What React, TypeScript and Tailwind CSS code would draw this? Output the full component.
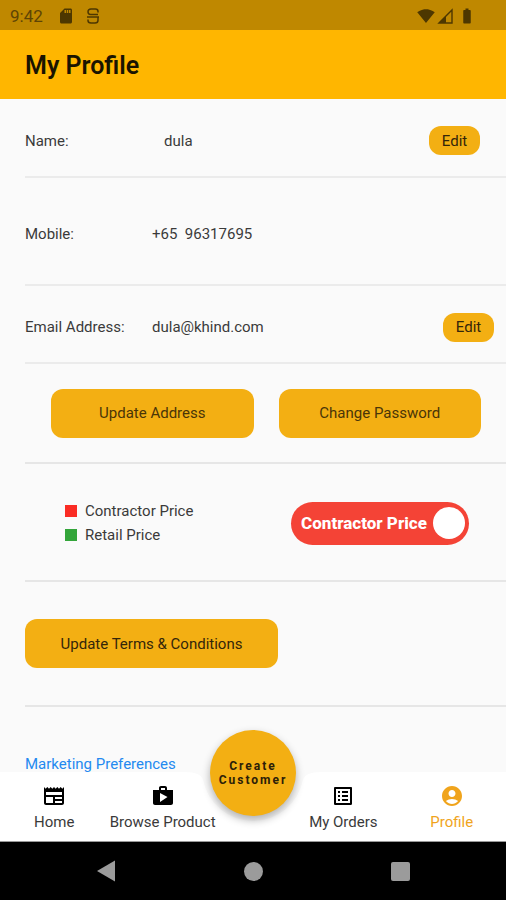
import { useState } from "react";
import type { ReactNode } from "react";
import {
  MdAccountCircle,
  MdBatteryFull,
  MdListAlt,
  MdOutlineNewspaper,
  MdSdCard,
  MdShop,
  MdSignalWifi4Bar,
} from "react-icons/md";

const TABS = [
  { id: "home", label: "Home", icon: MdOutlineNewspaper },
  { id: "browse", label: "Browse Product", icon: MdShop },
  { id: "orders", label: "My Orders", icon: MdListAlt },
  { id: "profile", label: "Profile", icon: MdAccountCircle },
];

/** Android status bar */
function StatusBar() {
  return (
    <div className="flex h-[30px] shrink-0 items-center justify-between bg-[#bf8800] pt-0.5 pr-[30px] pl-2.5 text-[#4d3700]">
      <div className="flex items-center">
        <span className="text-[17px] text-[#5e4405]">9:42</span>
        <MdSdCard size={18} className="ml-3.5" />
        <svg width="16" height="18" viewBox="0 0 16 18" fill="none" stroke="currentColor" strokeWidth="1.5" className="ml-2.5">
          <path d="M13 5.500V4.500Q13 2 10.500 2H6Q3 2 3 4.800Q3 7.500 5.500 7.500H13" />
          <path d="M2 10H14M13 10V13.200Q13 16 10 16H6Q3 16 3 13.500V12.500" />
        </svg>
      </div>
      <div className="flex items-center">
        <MdSignalWifi4Bar size={18} />
        <svg width="17" height="17" viewBox="0 0 17 17" className="ml-0.5">
          <path d="M2 15L15 2V15Z" fill="none" stroke="currentColor" strokeWidth="1.400" />
          <path d="M2 15L9 8V15Z" fill="currentColor" />
        </svg>
        <MdBatteryFull size={18} className="ml-1" />
      </div>
    </div>
  );
}

function InfoRow({
  label,
  className,
  action,
  children,
}: {
  label: string;
  className: string;
  action?: ReactNode;
  children: ReactNode;
}) {
  return (
    <div className={`ml-[25px] flex items-center border-b-2 border-[#ebebeb] ${className}`}>
      <span className="w-[127px] shrink-0">{label}</span>
      <span className="flex-1">{children}</span>
      {action}
    </div>
  );
}

function EditButton({ label }: { label: string }) {
  return (
    <button aria-label={label} className="h-[29px] w-[51px] rounded-xl bg-[#f3af13] text-[#33260a]">
      Edit
    </button>
  );
}

/** Switch between contractor and retail pricing */
function PriceToggle() {
  const [contractor, setContractor] = useState(true);

  return (
    <label
      className={`flex h-[43px] w-[178px] cursor-pointer items-center justify-between rounded-full px-1 ${
        contractor ? "bg-[#f44336]" : "flex-row-reverse bg-[#35a83a]"
      }`}
    >
      <input
        type="checkbox"
        role="switch"
        className="sr-only"
        checked={contractor}
        onChange={(e) => setContractor(e.target.checked)}
      />
      <span className="flex-1 text-center text-[17px] font-extrabold whitespace-nowrap text-white">
        {contractor ? "Contractor Price" : "Retail Price"}
      </span>
      <span className="size-8 shrink-0 rounded-full bg-white" />
    </label>
  );
}

function BottomBar() {
  const [active, setActive] = useState("profile");

  const renderTab = (tab: (typeof TABS)[number]) => {
    const Icon = tab.icon;
    const isActive = tab.id === active;
    return (
      <button
        key={tab.id}
        onClick={() => setActive(tab.id)}
        className={`flex flex-col items-center gap-1 whitespace-nowrap ${isActive ? "text-[#f0a41c]" : "text-[#3a3a3a]"}`}
      >
        <Icon size={24} className={isActive ? "" : "text-black"} />
        {tab.label}
      </button>
    );
  };

  return (
    <nav className="relative h-[70px] shrink-0 border-b border-[#999] bg-white">
      {/* Notch behind the floating button */}
      <svg width="136" height="56" viewBox="0 0 136 56" className="absolute top-0 left-1/2 -translate-x-1/2">
        <path d="M0 0H136Q120 0 118 8A51 51 0 0 1 18 8Q16 0 0 0Z" fill="#fafafa" />
      </svg>
      <div className="relative grid h-full grid-cols-[3fr_3fr_2fr_3fr_3fr] items-center pt-2.5 pb-2">
        {TABS.slice(0, 2).map(renderTab)}
        <span />
        {TABS.slice(2).map(renderTab)}
      </div>
      <button className="absolute -top-[42px] left-1/2 size-[86px] -translate-x-1/2 rounded-full bg-[#f3af13] text-xs leading-[14px] font-bold tracking-[2px] text-[#2b2008] shadow-[0_4px_8px_rgba(0,0,0,0.3)]">
        Create
        <br />
        Customer
      </button>
    </nav>
  );
}

/** Android navigation keys */
function SystemNav() {
  return (
    <div className="flex h-[58px] shrink-0 items-center justify-center gap-32 bg-black text-[#9b9b9b]">
      <button aria-label="Back">
        <svg width="20" height="22" viewBox="0 0 20 22" fill="currentColor">
          <path d="M19 .5V21.500L1 11Z" />
        </svg>
      </button>
      <button aria-label="Home" className="size-[19px] rounded-full bg-current" />
      <button aria-label="Recent apps" className="size-[19px] rounded-xs bg-current" />
    </div>
  );
}

export default function App() {
  return (
    <div className="flex h-screen flex-col overflow-hidden bg-[#fafafa] font-[Roboto,sans-serif] text-[15px] leading-5 text-[#3a3a3a]">
      <StatusBar />
      <header className="flex h-[69px] shrink-0 items-center bg-[#ffb600] px-[25px] pt-0.5">
        <h1 className="text-[25px] font-semibold text-[#1a1400]">My Profile</h1>
      </header>

      <main className="min-h-0 flex-1 overflow-y-auto [scrollbar-width:none]">
        <InfoRow label="Name:" className="h-[79px] pt-1.5 pr-[26px]" action={<EditButton label="Edit name" />}>
          <span className="pl-3">dula</span>
        </InfoRow>
        <InfoRow label="Mobile:" className="h-[108px] pt-1.5">
          +65&nbsp; 96317695
        </InfoRow>
        <InfoRow label="Email Address:" className="h-[78px] pt-1.5 pr-3" action={<EditButton label="Edit email address" />}>
          dula@khind.com
        </InfoRow>

        <div className="ml-[25px] flex h-[100px] items-center gap-[25px] border-b-2 border-[#e6e6e6] pr-[25px] pl-[26px]">
          <button className="h-[49px] flex-1 rounded-xl bg-[#f3af13] text-[#4a3508]">Update Address</button>
          <button className="h-[49px] flex-1 rounded-xl bg-[#f3af13] text-[#4a3508]">Change Password</button>
        </div>

        <div className="ml-[25px] flex h-[118px] items-center justify-between border-b-2 border-[#e6e6e6] pt-0.5 pr-[37px] pl-10">
          <ul className="flex flex-col gap-1">
            <li className="flex items-center gap-2">
              <span className="size-3 bg-[#fa2c24]" />
              Contractor Price
            </li>
            <li className="flex items-center gap-2">
              <span className="size-3 bg-[#33a53a]" />
              Retail Price
            </li>
          </ul>
          <PriceToggle />
        </div>

        <div className="ml-[25px] flex h-[125px] items-center border-b-2 border-[#e6e6e6]">
          <button className="h-[49px] w-1/2 min-w-[253px] rounded-xl bg-[#f3af13] text-[#33260a]">
            Update Terms &amp; Conditions
          </button>
        </div>

        <div className="px-[25px] pt-[49px] pb-12">
          <a href="#marketing" className="block leading-4 text-[#2389f0]">
            Marketing Preferences
          </a>
        </div>
      </main>

      <BottomBar />
      <SystemNav />
    </div>
  );
}
